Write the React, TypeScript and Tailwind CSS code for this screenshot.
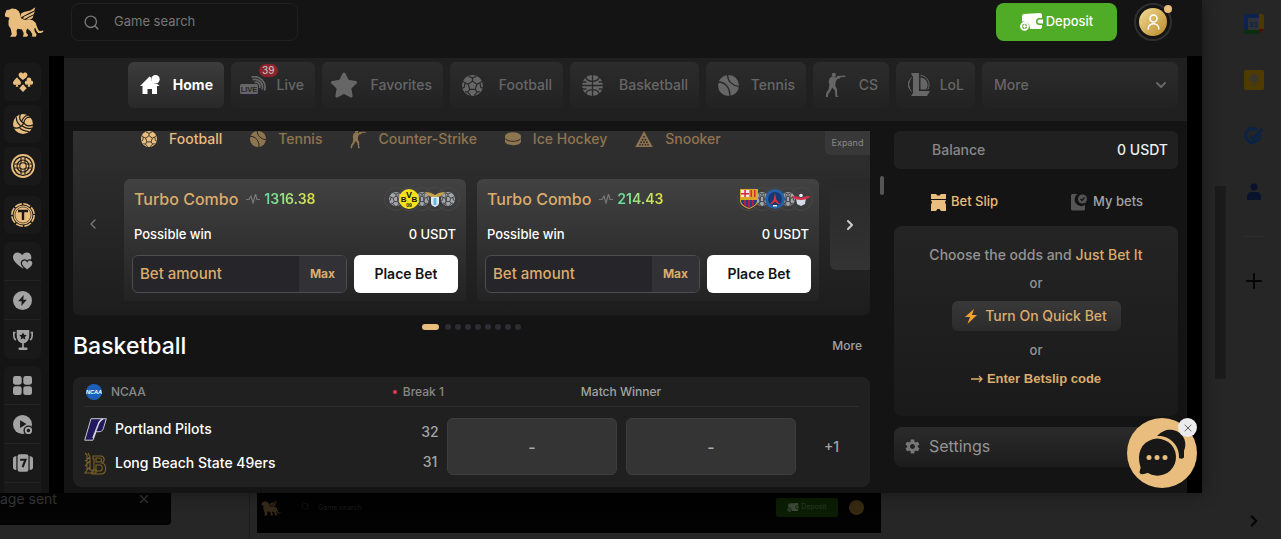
import React from "react";
import clsx from "clsx";
import { ChevronDown, ChevronLeft, ChevronRight, Plus, Search, X } from "lucide-react";
import { FaStar } from "react-icons/fa";
import { IoMdSettings } from "react-icons/io";

type IconProps = { className?: string };

const LionLogo = ({ className }: IconProps) => (
  <svg viewBox="10 20 124 96" className={className} fill="currentColor">
    <path d="M13 43 18 31 26 30 34 26 47 28 56 35 60 44 63 56 72 61 98 62 108 70 112 82 116 92 121 97 131 94 132 98 125 102 116 102 110 94 107 86 104 88 105 97 111 107 109 114 96 113 98 107 92 96 82 88 79 95 79 101 85 108 81 114 69 114 71 103 66 91 52 89 49 94 50 107 46 114 29 114 34 106 31 90 24 78 24 64 27 55 21 53 13 51Z" />
    <path d="M62 54 63 42 72 37 92 32 107 22 104 32 86 41 72 49Z" />
    <path d="M68 57 74 50 90 43 106 35 102 44 86 52 74 59Z" />
    <path d="M78 60 88 54 102 47 98 56 90 61Z" />
  </svg>
);

const SoccerBall = ({ className }: IconProps) => (
  <svg viewBox="0 0 24 24" className={className}>
    <circle cx="12" cy="12" r="12" fill="currentColor" />
    <g fill="none" stroke="#282828" strokeWidth="1.300">
      <path d="m12 7 5 3.600-1.900 5.800H8.900L7 10.600Z" />
      <path d="M12 7V3.500M17 10.600l3.600-1.600M15.100 16.400l2.300 3.200M8.900 16.400l-2.300 3.200M7 10.600 3.400 9" />
      <path d="m7.500 1.500 4.500 2 4.500-2M23 7l-2.400 2 .8 5 2 1M20.500 19l-3.100.6-3.400 3.900M10 23.500l-3.400-3.900-3.100-.6M.6 15l2-1 .8-5L1 7" />
    </g>
  </svg>
);

const TennisBall = ({ className }: IconProps) => (
  <svg viewBox="0 0 24 24" className={className}>
    <circle cx="12" cy="12" r="12" fill="currentColor" />
    <g fill="none" stroke="#282828" strokeWidth="1.500">
      <path d="M0 8c9 0 14 7 13.500 16M11 0c0 7 5 12 13 13" />
    </g>
  </svg>
);

const BasketBall = ({ className }: IconProps) => (
  <svg viewBox="0 0 24 24" className={className}>
    <circle cx="12" cy="12" r="12" fill="currentColor" />
    <g fill="none" stroke="#282828" strokeWidth="1.500">
      <path d="M12 0v24M0 12h24M4 2c2 7 14 7 16 0M4 22c2-7 14-7 16 0M0 8h5M19 8h5M0 16h5M19 16h5" />
    </g>
  </svg>
);

const VolleyBall = ({ className }: IconProps) => (
  <svg viewBox="0 0 24 24" className={className}>
    <circle cx="12" cy="12" r="12" fill="currentColor" />
    <g fill="none" stroke="#191919" strokeWidth="1.500">
      <path d="M13 11C8 9 7 4 9 0M13 11c0-5 4-8 9-7M13 11C9 17 4 18 0 16" />
      <path d="M10.500 8.500C12 5 14 2 18 1.500M9 14c-3-2-5-6-5-10M13 11c3 4 8 4 11 2M11 14.500c4 3 8 3.500 12 2.500M8 17c4 3 8 4 11 4" />
    </g>
  </svg>
);

const Soldier = ({ className }: IconProps) => (
  <svg viewBox="375 92 64 80" className={className} fill="currentColor">
    <circle cx="402" cy="101" r="6.500" />
    <path d="M396 106 410 109 412 104 434 103 438 104 438 107 422 108 420 112 412 114 408 121 406 133 412 146 412 164 417 168 407 169 405 149 397 140 392 150 385 160 383 170 377 168 379 156 386 145 388 131 386 122 389 111Z" />
  </svg>
);

const Suits = ({ className }: IconProps) => (
  <svg viewBox="0 0 30 30" className={className} fill="currentColor">
    <path d="M15 12C9 8 8 6 8.500 3.500 9.300 0 13.800 0 15 2.700 16.200 0 20.700 0 21.500 3.500 22 6 21 8 15 12Z" />
    <path d="m15 18.500 5.500 5.700L15 30l-5.500-5.800Z" />
    <path d="M6 8c2 3 6.500 5.500 6 9-.5 3-4 3-5 1.500L8 22H4l1-3.500C4 20 .5 20 0 17-.5 13.500 4 11 6 8Z" />
    <circle cx="24" cy="11.500" r="3.400" />
    <circle cx="21" cy="16" r="3.300" />
    <circle cx="27" cy="16" r="3.300" />
    <path d="m24 13 2 9h-4Z" />
  </svg>
);

const Roulette = ({ className }: IconProps) => (
  <svg viewBox="0 0 24 24" className={className} fill="none" stroke="currentColor">
    <circle cx="12" cy="12" r="11" strokeWidth="1.800" />
    <circle cx="12" cy="12" r="6.200" strokeWidth="5" />
    <g stroke="#191919" strokeWidth="1.100">
      <circle cx="12" cy="12" r="6" />
      <path d="M10 3.300v17.400M14 3.300v17.400M3.300 10h17.400M3.300 14h17.400" />
    </g>
    <circle cx="12" cy="12" r="2.700" fill="currentColor" stroke="none" />
  </svg>
);

const Token = ({ className }: IconProps) => (
  <svg viewBox="0 0 24 24" className={className}>
    <circle cx="12" cy="12" r="11.200" fill="none" stroke="currentColor" strokeWidth="1.600" strokeDasharray="7.200 1.600" />
    <circle cx="12" cy="12" r="9.500" fill="currentColor" />
    <circle cx="12" cy="12" r="8" fill="none" stroke="#191919" strokeWidth=".6" />
    <path d="M7 8h10M12 8v9" stroke="#191919" strokeWidth="2.400" />
  </svg>
);

const Hearts = ({ className }: IconProps) => (
  <svg viewBox="0 0 24 24" className={className} fill="currentColor">
    <path d="M12 21C3 15 0 11 0 7.500 0 1 8 0 11 5c3-5 11-4 11 2.500 0 5-4 9-10 13.500Z" />
    <path
      d="M17 23c-5.500-3.500-7-6.200-7-8.500 0-4 5.300-5 7-2 1.700-3 7-2 7 2 0 2.300-1.500 5-7 8.500Z"
      stroke="#191919"
      strokeWidth="1.500"
    />
  </svg>
);

const Bolt = ({ className }: IconProps) => (
  <svg viewBox="0 0 24 24" className={className}>
    <circle cx="12" cy="12" r="12" fill="currentColor" />
    <path d="M13.500 5 6.500 13h4.500l-.5 6 7-8H13Z" fill="#191919" />
  </svg>
);

const Trophy = ({ className }: IconProps) => (
  <svg viewBox="0 0 24 24" className={className}>
    <path d="M4.500 0h15v7c0 5-3 8.500-6.500 9v5h3a1.500 1.500 0 0 1 0 3H8a1.500 1.500 0 0 1 0-3h3v-5c-3.500-.5-6.500-4-6.500-9Z" fill="currentColor" />
    <path d="M3 3H1v4c0 2 .8 4 2.500 5M21 3h2v4c0 2-.8 4-2.500 5" fill="none" stroke="currentColor" strokeWidth="2" />
    <path d="m12 3 1.400 2.800 3.100.4-2.300 2.100.6 3.100-2.800-1.500-2.800 1.500.6-3.100-2.300-2.100 3.100-.4Z" fill="#191919" />
  </svg>
);

const Tiles = ({ className }: IconProps) => (
  <svg viewBox="0 0 24 24" className={className} fill="currentColor">
    <rect width="11" height="11" rx="3" />
    <rect x="13" width="11" height="11" rx="3" />
    <rect y="13" width="11" height="11" rx="3" />
    <rect x="13" y="13" width="11" height="11" rx="3" />
  </svg>
);

const LivePlay = ({ className }: IconProps) => (
  <svg viewBox="0 0 24 24" className={className}>
    <circle cx="12" cy="12" r="12" fill="currentColor" />
    <path d="M9 6.500v10l8-5Z" fill="#191919" />
    <circle cx="19.500" cy="19.500" r="6.300" fill="#191919" />
    <circle cx="19.500" cy="19.500" r="3.400" fill="none" stroke="currentColor" strokeWidth="2.400" />
  </svg>
);

const Slots = ({ className }: IconProps) => (
  <svg viewBox="0 0 24 24" className={className}>
    <path d="M4 3.500C1 4 0 5 0 7v10c0 2 1 3 4 3.500ZM20 3.500c3 .5 4 1.500 4 3.500v10c0 2-1 3-4 3.500Z" fill="currentColor" />
    <rect x="5.500" y="1.500" width="13" height="21" rx="2.500" fill="currentColor" />
    <path d="M8.500 8h6.500l-3.500 9" fill="none" stroke="#191919" strokeWidth="2.500" />
  </svg>
);

const Coin = ({ className }: IconProps) => (
  <svg viewBox="0 0 24 24" className={className}>
    <circle cx="12" cy="12" r="12" fill="currentColor" />
    <circle cx="12" cy="12" r="6" fill="#191919" />
  </svg>
);

const HomeIcon = ({ className }: IconProps) => (
  <svg viewBox="0 0 20 20" className={className} fill="currentColor">
    <path d="M0 11 9.500 1.500l1.500 1c0 4 2.500 6.500 6.500 6.500L19.500 11H17v8h-5v-5H7.500v5h-5v-8Z" />
    <circle cx="15.500" cy="4.200" r="4.200" />
  </svg>
);

const LiveIcon = ({ className }: IconProps) => (
  <svg viewBox="0 0 26 18" className={className}>
    <rect y="8" width="18" height="10" rx="1.500" fill="currentColor" />
    <text x="9" y="16" fontSize="7.500" fontWeight="700" textAnchor="middle" fill="#282828" fontFamily="Liberation Sans">
      LIVE
    </text>
    <g fill="none" stroke="currentColor" strokeWidth="1.700">
      <path d="M14.500 6.500a4 4 0 0 1 5 5.500M12.500 3.800a7.500 7.500 0 0 1 9.500 9.700" />
      <path d="M11.500 1.200a10.500 10.500 0 0 1 13 13.300" />
    </g>
  </svg>
);

const LeagueIcon = ({ className }: IconProps) => (
  <svg viewBox="0 0 22 24" className={className} fill="currentColor">
    <path d="M3 0h8v18h11l-3 5H3l2-3V4Z" />
    <path d="M12.500 4.500a7.500 7.500 0 0 1 5.500 12h-5.500Z" />
    <path d="M12.500 2.300a9.500 9.500 0 0 1 7.300 14.200M3.500 4.500a10 10 0 0 0 0 14M1.500 7a10 10 0 0 0 0 9" fill="none" stroke="currentColor" strokeWidth="1" />
  </svg>
);

const Puck = ({ className }: IconProps) => (
  <svg viewBox="0 0 24 20" className={className}>
    <path d="M0 6v8c2 7 22 7 24 0V6" fill="currentColor" />
    <ellipse cx="12" cy="5.500" rx="12" ry="5.500" fill="currentColor" />
    <path d="M0 9c3 6 21 6 24 0" fill="none" stroke="#2b2b2b" strokeWidth="1.500" />
  </svg>
);

const Rack = ({ className }: IconProps) => (
  <svg viewBox="0 0 24 22" className={className}>
    <path d="M12 0 24 22H0Z" fill="currentColor" />
    <g fill="#2b2b2b">
      <circle cx="12" cy="8" r="1.300" />
      <circle cx="10" cy="12" r="1.300" />
      <circle cx="14" cy="12" r="1.300" />
      <circle cx="8" cy="15.500" r="1.300" />
      <circle cx="12" cy="15.500" r="1.300" />
      <circle cx="16" cy="15.500" r="1.300" />
      <circle cx="6.500" cy="19" r="1.200" />
      <circle cx="10" cy="19" r="1.200" />
      <circle cx="14" cy="19" r="1.200" />
      <circle cx="17.500" cy="19" r="1.200" />
    </g>
  </svg>
);

const Wallet = ({ className }: IconProps) => (
  <svg viewBox="0 0 23 18" className={className}>
    <path d="M4 1 20 0c1.500 0 2 1 2 2.500V5h-2.500a3.500 3.500 0 0 0 0 7H22v1.500c0 2-1 2.500-2.500 2.500H10C10 11 7 8 2 8.500V4c0-2 .5-3 2-3Z" fill="#fff" />
    <path d="M23 6.500h-3.500a2 2 0 0 0 0 4H23Z" fill="#fff" />
    <circle cx="4.500" cy="13.300" r="3.500" fill="none" stroke="#fff" strokeWidth="1.900" />
    <path d="M4.500 11.300v4M2.500 13.300h4" stroke="#fff" strokeWidth="1.400" />
  </svg>
);

const Person = ({ className }: IconProps) => (
  <svg viewBox="0 0 14 18" className={className} fill="none" stroke="currentColor" strokeWidth="1.700" strokeLinecap="round">
    <circle cx="7" cy="5" r="4" />
    <path d="M1 17c0-8 12-8 12 0" />
  </svg>
);

const Pulse = () => (
  <svg viewBox="0 0 14 10" className="h-[10px] w-[14px]" fill="none" stroke="#777" strokeWidth="1.200">
    <path d="M0 5.500h3L5 2l2 7 2.500-9L11 5.500h3" />
  </svg>
);

const badgeBall = <SoccerBall className="size-[14px] text-[#a3a6ac]" />;

const Dortmund = (
  <svg viewBox="0 0 20 20" className="size-5">
    <circle cx="10" cy="10" r="10" fill="#f6e21b" />
    <g fill="#141414" fontFamily="Liberation Sans" fontWeight="700" textAnchor="middle">
      <text x="4.700" y="13" fontSize="8">B</text>
      <text x="10" y="9" fontSize="9">V</text>
      <text x="15.300" y="13" fontSize="8">B</text>
      <text x="10" y="18" fontSize="5">09</text>
    </g>
  </svg>
);

const Lazio = (
  <svg viewBox="0 0 20 20" className="size-5">
    <path d="M0 3c4 0 7 1 10 3 3-2 6-3 10-3-2 3-5 5-8 5H8C5 8 2 6 0 3Z" fill="#c6a24c" />
    <path d="M6 8h8v6c0 2-2 3-4 4-2-1-4-2-4-4Z" fill="#dcecf5" />
    <path d="M8.500 9h3v7h-3Z" fill="#69b5e2" />
  </svg>
);

const Barcelona = (
  <svg viewBox="0 0 20 20" className="size-5">
    <path d="M1 0h18v11c0 5-4 7-9 9-5-2-9-4-9-9Z" fill="#d9a826" />
    <path d="M2 1h8v7H2Z" fill="#f2e9e4" />
    <path d="M5.300 1h1.500v7H5.300ZM2 4h8v1.500H2Z" fill="#d12a36" />
    <path d="M11.500 1H13v7h-1.500ZM15 1h1.500v7H15Z" fill="#d12a36" />
    <path d="M2 11h16c0 4-3 6-8 8-5-2-8-4-8-8Z" fill="#213f87" />
    <path d="M5 11h2v6H5ZM9 11h2v8H9ZM13 11h2v6h-2Z" fill="#b11e42" />
  </svg>
);

const Paris = (
  <svg viewBox="0 0 20 20" className="size-5">
    <circle cx="10" cy="10" r="10" fill="#2560a5" />
    <circle cx="10" cy="10" r="7" fill="#123a70" />
    <path d="M10 4 8.500 11 5 15h2l3-2.500 3 2.500h2l-3.500-4Z" fill="#e0303f" />
    <path d="M8 16h4v1.500H8Z" fill="#eee" />
  </svg>
);

const Leipzig = (
  <svg viewBox="0 0 20 20" className="size-5">
    <path d="M5 9h10l-1 6-4 2-4-2Z" fill="#d4dbe6" />
    <path d="M0 8c3-2 5-1 10 1 5-2 7-3 10-1-3 0-3 3-10 3S3 8 0 8Z" fill="#d5304b" />
    <circle cx="10" cy="6.500" r="1.800" fill="#e9edf2" />
  </svg>
);

const topTabs = [
  { label: "Home", width: "w-24", icon: <HomeIcon className="size-5" />, active: true },
  { label: "Live", width: "w-[84px]", icon: <LiveIcon className="h-[18px] w-[26px]" />, badge: "39" },
  { label: "Favorites", width: "w-[121px]", icon: <FaStar className="size-7" /> },
  { label: "Football", width: "w-[113px]", icon: <SoccerBall className="size-[21px]" /> },
  { label: "Basketball", width: "w-[129px]", icon: <BasketBall className="size-[21px]" /> },
  { label: "Tennis", width: "w-[100px]", icon: <TennisBall className="size-[21px]" /> },
  { label: "CS", width: "w-[76px]", icon: <Soldier className="h-[26px] w-[21px]" /> },
  { label: "LoL", width: "w-[79px]", icon: <LeagueIcon className="h-6 w-[22px]" /> },
];

const sportTabs = [
  { label: "Football", icon: <SoccerBall className="size-4" />, active: true },
  { label: "Tennis", icon: <TennisBall className="size-4" /> },
  { label: "Counter-Strike", icon: <Soldier className="h-5 w-4" /> },
  { label: "Ice Hockey", icon: <Puck className="h-[14px] w-4" /> },
  { label: "Snooker", icon: <Rack className="h-4 w-[18px]" /> },
];

const combos = [
  { odds: "1316.38", badges: [badgeBall, Dortmund, badgeBall, Lazio, badgeBall] },
  { odds: "214.43", badges: [Barcelona, badgeBall, Paris, badgeBall, Leipzig] },
];

const railGroups = [
  [
    { name: "Favourites", icon: <Hearts className="size-5" /> },
    { name: "Originals", icon: <Bolt className="size-[19px]" /> },
    { name: "Tournaments", icon: <Trophy className="size-5" /> },
  ],
  [
    { name: "All games", icon: <Tiles className="size-[19px]" /> },
    { name: "Live games", icon: <LivePlay className="size-[19px] overflow-visible" /> },
    { name: "Slots", icon: <Slots className="size-5" /> },
    { name: "Promotions", icon: <Coin className="size-5" /> },
  ],
];

const goldRail = [
  { name: "Casino", icon: <Suits className="size-5" /> },
  { name: "Sport", icon: <VolleyBall className="size-5" /> },
  { name: "Live casino", icon: <Roulette className="size-6" /> },
  { name: "Token", icon: <Token className="size-6" />, spaced: true },
];

function Header() {
  return (
    <header className="flex h-14 shrink-0 items-start bg-[#141414] pl-1 pr-[30px] pt-[3px]">
      <a href="#home" aria-label="Home page" className="pt-[3px]">
        <LionLogo className="h-8 w-10 text-[#e9bd7d]" />
      </a>
      <label className="ml-[27px] flex h-[38px] w-[227px] items-center gap-[14px] rounded-lg border border-[#202020] px-[11px]">
        <Search className="size-[17px] text-[#777]" strokeWidth={2} />
        <input
          aria-label="Game search"
          placeholder="Game search"
          className="w-0 flex-1 bg-transparent text-[13px] outline-none placeholder:text-[#777]"
        />
      </label>
      <button className="ml-auto flex h-[38px] w-[121px] items-center justify-center gap-[3px] rounded-lg bg-[#50ab27] text-[13px] font-medium text-white">
        <Wallet className="h-[18px] w-[23px]" />
        Deposit
      </button>
      <button
        aria-label="Profile"
        className="relative ml-[17px] flex size-[38px] items-center justify-center rounded-full border-2 border-[#303030]"
      >
        <span className="flex size-7 shrink-0 items-center justify-center rounded-full bg-linear-to-br from-[#f3dc94] to-[#b98a20] text-white">
          <Person className="h-4 w-[13px]" />
        </span>
        <span className="absolute right-[-2px] top-0 size-2 rounded-full bg-[#e9bd7d]" />
      </button>
    </header>
  );
}

function Rail() {
  return (
    <nav className="flex w-[49px] shrink-0 flex-col gap-1 bg-[#141414] pl-1 pr-2 pt-[7px]">
      {goldRail.map((item) => (
        <a
          key={item.name}
          href="#casino"
          aria-label={item.name}
          className={clsx(
            "flex h-[38px] shrink-0 items-center justify-center rounded-md bg-[#191919] text-[#e9bd7d]",
            item.spaced && "mb-1 mt-[7px]"
          )}
        >
          {item.icon}
        </a>
      ))}
      {railGroups.map((group, i) => (
        <div key={i} className="mb-[3px] shrink-0 divide-y divide-[#232323] rounded-md bg-[#191919] text-[#a3a3a3]">
          {group.map((item) => (
            <a key={item.name} href="#casino" aria-label={item.name} className="flex h-[39px] items-center justify-center">
              {item.icon}
            </a>
          ))}
        </div>
      ))}
    </nav>
  );
}

function TopTabs() {
  return (
    <nav className="mt-[2px] flex h-[63px] shrink-0 items-start gap-[7px] bg-[#202020] pl-16 pr-[9px] pt-1 text-sm font-medium">
      {topTabs.map((tab) => (
        <a
          key={tab.label}
          href="#sport"
          className={clsx(
            "relative flex h-[46px] shrink-0 items-center justify-between rounded-md bg-linear-to-b pr-[11px]",
            tab.width,
            tab.label === "Favorites" ? "pl-2" : tab.label === "Live" ? "pl-[9px]" : "pl-3",
            tab.active ? "from-[#3c3c3c] to-[#292929] font-bold text-white" : "from-[#2c2c2c] to-[#222] text-[#666]"
          )}
        >
          {tab.icon}
          <span>{tab.label}</span>
          {tab.badge && (
            <span className="absolute left-7 top-[2px] rounded-full bg-[#8c222b] px-[3px] text-[10px] leading-[13px] text-[#bbb]">
              {tab.badge}
            </span>
          )}
        </a>
      ))}
      <button className="flex h-[46px] flex-1 items-center justify-between rounded-md bg-linear-to-b from-[#2c2c2c] to-[#222] pl-3 pr-[9px] text-[#666]">
        More
        <ChevronDown className="size-4" strokeWidth={3} />
      </button>
    </nav>
  );
}

function ComboCard({ odds, badges }: { odds: string; badges: React.ReactNode[] }) {
  return (
    <article className="flex h-[122px] min-w-0 flex-1 flex-col rounded-t-md bg-linear-to-b from-[#424242] to-[#232323] px-2 pt-2">
      <div className="flex h-6 items-center pl-[2px]">
        <h3 className="text-base font-medium text-[#dcac6c]">Turbo Combo</h3>
        <span className="ml-2 flex items-center gap-1">
          <Pulse />
          <span className="bg-linear-to-r from-[#53dea0] to-[#e4e23a] bg-clip-text text-sm font-semibold text-transparent">
            {odds}
          </span>
        </span>
        <div className="-mr-[2px] ml-auto flex">
          {badges.map((badge, i) => (
            <span
              key={i}
              className={clsx(
                "-ml-[11px] flex size-6 shrink-0 items-center justify-center rounded-full border border-[#484848] first:ml-0",
                badge !== badgeBall && "z-10"
              )}
            >
              <span className="shrink-0">{badge}</span>
            </span>
          ))}
        </div>
      </div>
      <div className="mt-3 flex h-6 items-center justify-between px-[2px] text-[13px] font-medium text-white">
        <span>Possible win</span>
        <span>0 USDT</span>
      </div>
      <div className="mt-2 flex h-[38px] gap-[7px]">
        <div className="flex min-w-0 flex-1 overflow-hidden rounded-md border border-[#4d4d50] bg-[#25252a]">
          <input
            aria-label="Bet amount"
            placeholder="Bet amount"
            className="w-0 flex-1 bg-transparent px-[7px] text-[15px] font-medium text-[#dcac6c] outline-none placeholder:text-[#dcac6c]"
          />
          <button className="w-[47px] bg-[#323236] text-xs font-bold text-[#dcac6c]">Max</button>
        </div>
        <button className="w-26 rounded-md bg-white text-sm font-semibold text-[#141414]">Place Bet</button>
      </div>
    </article>
  );
}

function Carousel() {
  return (
    <section className="h-[184px] shrink-0 overflow-hidden rounded-b-md bg-linear-to-b from-[#303030] to-[#1d1d1d]">
      <div className="flex h-6 items-start">
        <nav className="flex h-4 flex-1 items-center gap-7 pl-[68px] text-sm font-medium">
          {sportTabs.map((tab) => (
            <a
              key={tab.label}
              href="#sport"
              className={clsx("flex items-center gap-3", tab.active ? "text-[#e9bd7d]" : "text-[#8f7450]")}
            >
              {tab.icon}
              {tab.label}
            </a>
          ))}
        </nav>
        <button className="h-6 w-[45px] rounded-bl-md bg-[#383838] text-[9px] text-[#888]">Expand</button>
      </div>
      <div className="mt-6 flex gap-[11px]">
        <button aria-label="Previous" className="flex w-10 items-center justify-center pb-8 text-[#777]">
          <ChevronLeft className="size-4" />
        </button>
        {combos.map((combo) => (
          <ComboCard key={combo.odds} {...combo} />
        ))}
        <button aria-label="Next" className="flex h-[91px] w-10 items-center justify-center rounded-l-md bg-linear-to-b from-[#292929] to-[#333] text-[#ccc]">
          <ChevronRight className="size-4" strokeWidth={3} />
        </button>
      </div>
    </section>
  );
}

function Match() {
  return (
    <section className="h-[110px] shrink-0 rounded-lg bg-[#202020] px-[11px] font-medium">
      <div className="flex h-[30px] items-center border-b border-[#2d2d2d] text-xs text-[#888]">
        <svg viewBox="0 0 20 20" className="mx-[2px] size-4">
          <circle cx="10" cy="10" r="10" fill="#1c5fb8" />
          <text x="10" y="13" fontSize="7" fontWeight="700" fontStyle="italic" textAnchor="middle" fill="#fff" fontFamily="Liberation Sans">
            NCAA
          </text>
        </svg>
        <span className="ml-[7px]">NCAA</span>
        <span className="ml-auto flex items-center gap-[6px]">
          <span className="size-1 rounded-full bg-[#e63950]" />
          Break 1
        </span>
        <span className="w-[354px] text-center text-[#a3a3a3]">Match Winner</span>
        <span className="w-[61px]" />
      </div>
      <div className="flex pt-[11px]">
        <div className="flex flex-1 flex-col gap-3 text-sm text-white">
          <div className="flex h-[22px] items-center gap-2">
            <svg viewBox="0 0 23 23" className="size-[23px]">
              <path d="M7 .7h15.300l-3 10c-.8 2.200-2 3-4.500 3H12l-3 8.500H.7Z" fill="#21185e" stroke="#c8c8ce" strokeWidth="1" />
              <path d="M19 1c-3 1-4 3-5 6l-5 13" fill="none" stroke="#d8d8de" strokeWidth="1.500" />
            </svg>
            Portland Pilots
          </div>
          <div className="flex h-[22px] items-center gap-2">
            <svg viewBox="0 0 23 23" className="size-[23px]" fill="none" stroke="#7c6223" strokeWidth="1.100">
              <path d="M1 1l2 2v15l-2 3h11v-3H6V5L4 1M3 18l3-3M1 9l5-4M1 14l5-5" />
              <path d="M9 4h8c4 0 4 6 1 7 5 1 5 11-1 11H8v-3h2V7H9ZM12 6h4c2 0 2 4 0 4h-4ZM12 13h4c3 0 3 6 0 6h-4Z" />
            </svg>
            Long Beach State 49ers
          </div>
        </div>
        <div className="flex w-[34px] flex-col items-center gap-[6px] pt-[2px] text-sm text-[#a3a3a3]">
          <span className="h-6 leading-6">32</span>
          <span className="h-6 leading-6">31</span>
        </div>
        <button className="h-[57px] w-[170px] rounded-md border border-[#3e3e3e] bg-[#343434] text-[#aaa]">-</button>
        <button className="ml-[9px] h-[57px] w-[170px] rounded-md border border-[#3e3e3e] bg-[#343434] text-[#aaa]">-</button>
        <a href="#markets" className="flex h-[57px] w-[63px] items-center justify-center pl-2 text-sm text-[#a3a3a3]">
          +1
        </a>
      </div>
    </section>
  );
}

function BetSlip() {
  return (
    <aside className="w-[284px] shrink-0">
      <div className="flex h-[38px] items-center justify-between rounded-md bg-[#202020] pl-[38px] pr-[10px] text-sm font-medium">
        <span className="text-[#888]">Balance</span>
        <span className="text-[#eee]">0 USDT</span>
      </div>
      <div className="flex h-[57px] items-center justify-between pl-[37px] pr-[35px] pt-[9px] text-[13px] font-medium">
        <button className="flex items-center gap-[5px] text-[#e9bd7d]">
          <svg viewBox="0 0 15 17" className="h-[17px] w-[15px]" fill="currentColor">
            <path d="M0 0h5l1.500 1.500h2L10 0h5v5H0ZM0 6h15l-1 2.500 1 2V17h-5l-1.500-2h-2L5 17H0v-6.500l1-2Z" />
          </svg>
          Bet Slip
        </button>
        <button className="flex items-center gap-[6px] text-[#a3a3a3]">
          <svg viewBox="0 0 16 17" className="h-[17px] w-4">
            <path d="M2 0h4.500a6 6 0 0 0 7.500 11v4c0 1-.5 1.500-2 1.500H2c-1.500 0-2-.5-2-2V2C0 .5.500 0 2 0Z" fill="#555" />
            <circle cx="11.500" cy="5" r="4.500" fill="#555" />
            <path d="m9.500 5 1.500 1.500 2.500-3" fill="none" stroke="#141414" strokeWidth="1.300" />
          </svg>
          My bets
        </button>
      </div>
      <div className="flex h-[190px] flex-col items-center rounded-lg bg-linear-to-b from-[#242424] to-[#1a1a1a] pt-[18px] text-[13px] font-medium text-[#949494]">
        <p className="text-sm leading-[22px]">
          Choose the odds and <span className="text-[#dcac6c]">Just Bet It</span>
        </p>
        <p className="mt-[6px] leading-[22px]">or</p>
        <button className="mt-[7px] flex h-[30px] w-[169px] items-center justify-center gap-2 rounded-md bg-linear-to-b from-[#393939] to-[#2b2b2b] text-sm text-[#dcac6c]">
          <svg viewBox="0 0 12 15" className="h-[15px] w-3" fill="#f2a12e">
            <path d="M9 0 0 8h5l-2.500 7L12 6H7Z" />
          </svg>
          Turn On Quick Bet
        </button>
        <p className="mt-2 leading-[22px]">or</p>
        <button className="mt-[7px] flex items-center gap-1 font-['Liberation_Sans',sans-serif] font-bold leading-[22px] text-[#dcac6c]">
          <svg viewBox="0 0 12 10" className="h-[10px] w-3" fill="none" stroke="currentColor" strokeWidth="1.300">
            <path d="M0 5h11M8 2l3 3-3 3" />
          </svg>
          Enter Betslip code
        </button>
      </div>
      <button className="mt-[11px] flex h-10 w-full items-center gap-2 rounded-lg bg-linear-to-b from-[#2b2b2b] to-[#1c1c1c] px-[10px] pb-[2px] text-base text-[#949494]">
        <IoMdSettings className="size-[17px] text-[#777]" />
        Settings
      </button>
    </aside>
  );
}

function ChatButton() {
  return (
    <div className="absolute bottom-[5px] right-[5px] size-[70px]">
      <button aria-label="Open chat" className="size-full rounded-full bg-[#e9bd7d]">
        <svg viewBox="0 0 70 70" className="size-full">
          <path d="M30 18C36 12 41 11 46 12 56 14 61 24 57 33L57 39c0 2-4 2-5 1C53 28 43 17 30 18Z" fill="#171717" />
          <path d="M12 39a18.500 18.500 0 1 1 9 16c-2-.5-4 2-7 1-3-1 0-5-.5-7-1-3-1.500-6-1.500-10Z" fill="#171717" />
          <g fill="#e9bd7d">
            <circle cx="22" cy="39.500" r="2.500" />
            <circle cx="30" cy="39.500" r="2.500" />
            <circle cx="38" cy="39.500" r="2.500" />
          </g>
        </svg>
      </button>
      <button
        aria-label="Close chat"
        className="absolute right-0 top-0 flex size-[19px] items-center justify-center rounded-full bg-[#ebebeb] text-[#666]"
      >
        <X className="size-3" />
      </button>
    </div>
  );
}

// what stays visible of the mailbox behind the casino window
function MailFooter() {
  return (
    <footer className="flex h-[46px] shrink-0 items-start text-[#383838]">
      <div className="flex h-8 w-[171px] justify-between rounded-br-sm bg-[#040404] pr-5">
        <span className="text-sm leading-3">age sent</span>
        <X className="-mt-px size-[14px]" />
      </div>
      <div className="ml-[78px] h-full w-px bg-[#1c1c1c]" />
      <div className="ml-[7px] flex h-10 w-[624px] items-start bg-[#020202] pl-1 pr-[17px] pt-[5px]">
        <LionLogo className="mt-[2px] h-4 w-5 text-[#35291a]" />
        <Search className="ml-5 mt-1 size-[9px] text-[#151515]" />
        <span className="ml-2 text-[7px] leading-5 text-[#1b1b1b]">Game search</span>
        <span className="ml-auto flex h-[19px] w-[62px] items-center justify-center gap-[2px] rounded-xs bg-[#0b1d04] text-[7px] text-[#2b3b24]">
          <Wallet className="h-[9px] w-3 opacity-20" />
          Deposit
        </span>
        <span className="ml-[11px] mt-[2px] size-[15px] rounded-full bg-[#35290f]" />
      </div>
    </footer>
  );
}

function MailRail() {
  return (
    <aside className="flex w-[79px] shrink-0 justify-between pl-[13px] pr-[17px]">
      <div className="flex w-[11px] flex-col">
        <div className="mt-[186px] h-[193px] bg-[#1b1b1b]" />
      </div>
      <nav className="flex w-5 flex-col items-center pt-[14px]">
        <a href="#calendar" aria-label="Calendar">
          <svg viewBox="0 0 20 20" className="size-5">
            <path d="M2 0h13v4H4v12H0V2C0 1 1 0 2 0Z" fill="#0c2350" />
            <path d="M15 0h3c1 0 2 1 2 2v13h-5Z" fill="#4d3900" />
            <path d="M0 16h15v4H2c-1 0-2-1-2-2Z" fill="#08300f" />
            <path d="M15 15h5l-5 5Z" fill="#4b0e0b" />
            <path d="M4 4h11v12H4Z" fill="#2e3237" />
            <text x="9.500" y="13" fontSize="8" fontWeight="700" textAnchor="middle" fill="#10234a" fontFamily="Liberation Sans">
              31
            </text>
          </svg>
        </a>
        <a href="#keep" aria-label="Keep" className="mt-9 flex size-5 items-center justify-center rounded-xs bg-[#4f3b00]">
          <svg viewBox="0 0 10 12" className="h-3 w-[10px]" fill="#3b362c">
            <circle cx="5" cy="4.500" r="4.500" />
            <path d="M3 10h4v2H3Z" />
          </svg>
        </a>
        <a href="#tasks" aria-label="Tasks" className="mt-9">
          <svg viewBox="0 0 20 20" className="size-5" fill="none" stroke="#0b2345" strokeWidth="3">
            <path d="M13 4a7 7 0 1 0 2.500 4M6 10l3.500 3L18 3" />
          </svg>
        </a>
        <a href="#contacts" aria-label="Contacts" className="mt-9">
          <svg viewBox="0 0 20 20" className="size-5" fill="#08142e">
            <circle cx="10" cy="5" r="3.500" />
            <path d="M3 18v-3c0-3 2-5 5-5h4c3 0 5 2 5 5v3Z" />
          </svg>
        </a>
        <span className="mt-[34px] h-px w-5 bg-[#2d2d2d]" />
        <button aria-label="Get add-ons" className="mt-8 text-[#060606]">
          <Plus className="size-6" />
        </button>
        <button aria-label="Hide side panel" className="mb-[9px] mt-auto text-[#060606]">
          <ChevronRight className="size-[18px]" strokeWidth={3} />
        </button>
      </nav>
    </aside>
  );
}

export default function App() {
  return (
    <div className="flex h-screen overflow-hidden bg-[#262626] font-[Inter,sans-serif]">
      <div className="flex min-w-0 flex-1 flex-col">
        <div className="relative z-10 flex min-h-0 flex-1 flex-col bg-black shadow-[0_0_16px_#00000070]">
          <Header />
          <div className="flex min-h-0 flex-1 overflow-hidden">
            <Rail />
            <main className="mx-[15px] flex min-w-0 flex-1 flex-col bg-[#141414]">
              <TopTabs />
              <div className="flex min-h-0 flex-1 overflow-hidden px-[9px] pt-[10px]">
                <div className="flex min-w-0 flex-1 flex-col">
                  <Carousel />
                  <div className="flex h-6 shrink-0 items-center justify-center gap-1">
                    <span className="mr-[2px] h-[6px] w-[17px] rounded-full bg-[#e9bd7d]" />
                    {Array.from({ length: 8 }, (_, i) => (
                      <span key={i} className="size-[6px] rounded-full bg-[#2c2e33]" />
                    ))}
                  </div>
                  <div className="flex h-[38px] shrink-0 items-start justify-between pr-2">
                    <h2 className="text-[23px] font-medium leading-[14px] text-white">Basketball</h2>
                    <a href="#basketball" className="text-xs font-medium leading-[14px] text-[#a3a3a3]">
                      More
                    </a>
                  </div>
                  <Match />
                </div>
                <div className="flex w-6 shrink-0 justify-center pt-[45px]">
                  <div className="h-[19px] w-1 rounded-full bg-[#555]" />
                </div>
                <BetSlip />
              </div>
            </main>
          </div>
          <ChatButton />
        </div>
        <MailFooter />
      </div>
      <MailRail />
    </div>
  );
}
